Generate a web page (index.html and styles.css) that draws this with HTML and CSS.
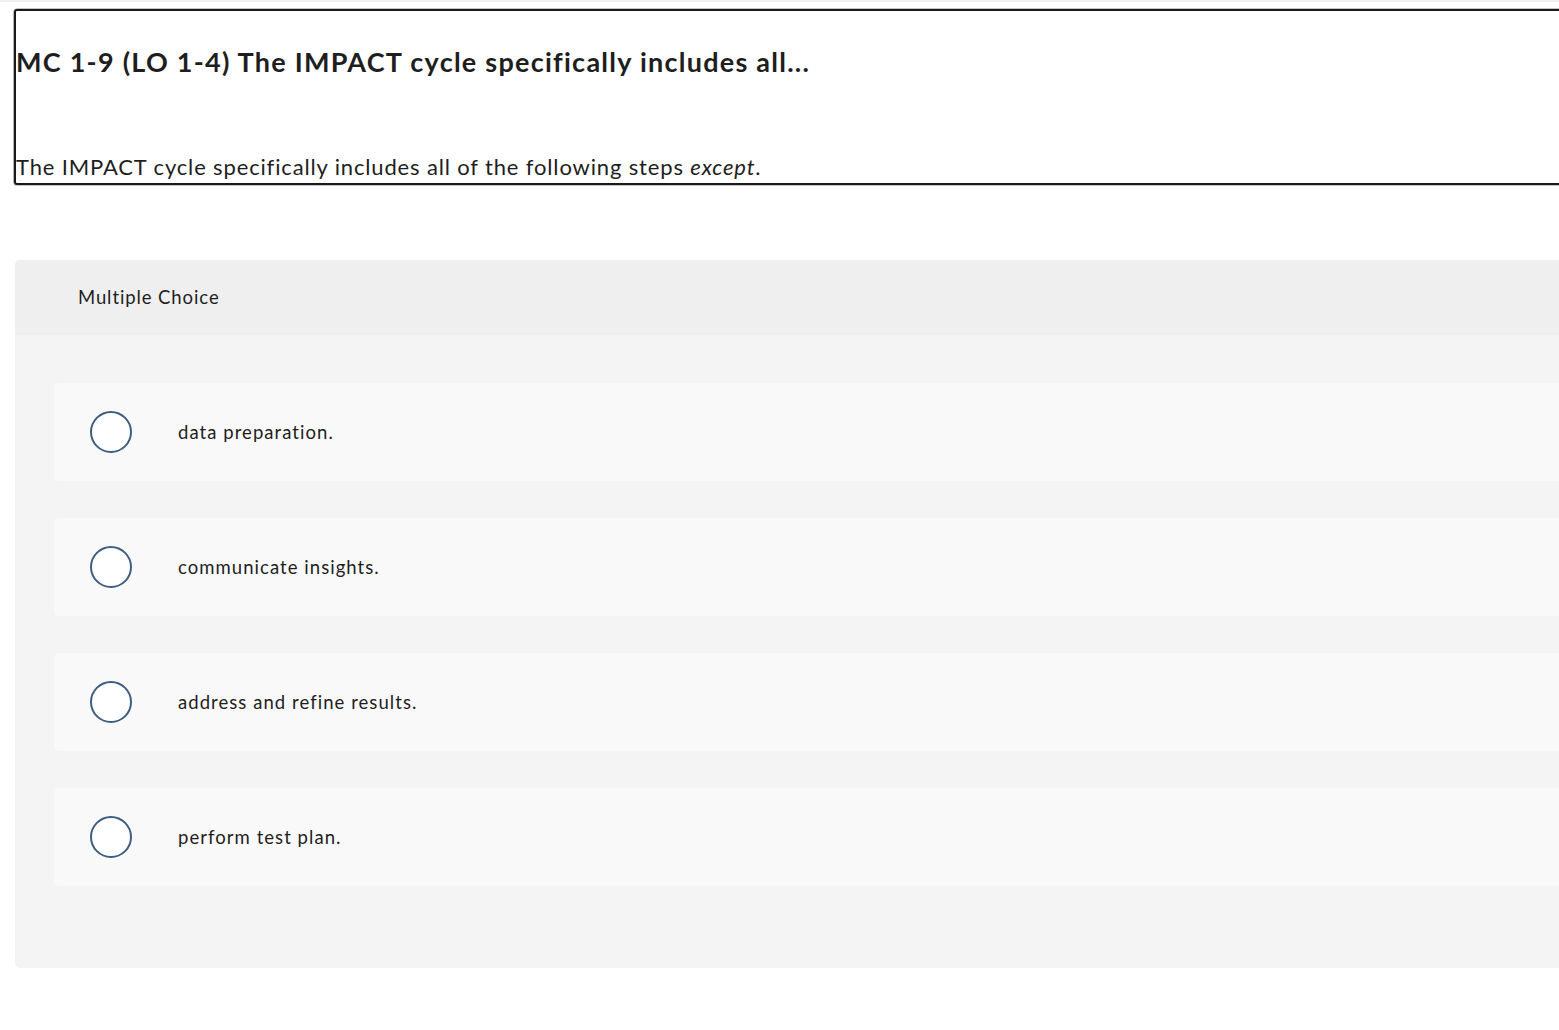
FILE: index.html
```html
<!DOCTYPE html>
<html>
<head>
<meta charset="utf-8">
<link rel="stylesheet" href="styles.css">
</head>
<body>
<div class="page">
  <div class="question">
    <h2 class="q-title">MC 1-9 (LO 1-4) The IMPACT cycle specifically includes all...</h2>
    <p class="q-text">The IMPACT cycle specifically includes all of the following steps <em>except</em>.</p>
  </div>
  <div class="panel">
    <div class="panel-head">Multiple Choice</div>
    <div class="options">
      <label class="option"><span class="radio"></span><span class="opt-text">data preparation.</span></label>
      <label class="option"><span class="radio"></span><span class="opt-text">communicate insights.</span></label>
      <label class="option"><span class="radio"></span><span class="opt-text">address and refine results.</span></label>
      <label class="option"><span class="radio"></span><span class="opt-text">perform test plan.</span></label>
    </div>
  </div>
</div>
</body>
</html>
```
FILE: styles.css
```css
html, body {
  margin: 0;
  padding: 0;
  background: #fff;
  overflow: hidden;
}
body {
  font-family: "Lato", "Noto Sans", sans-serif;
  color: #1e1e1e;
  border-top: 2px solid #efefef;
}
.page {
  padding: 7px 0 0 14px;
  width: 1600px;
}
.question {
  border: 2px solid #1a1a1a;
  box-shadow: 0 0 0 0.6px #8a8a8a;
  border-radius: 3px;
  width: 1580px;
  display: flex;
  flex-direction: column;
}
.q-title {
  margin: 0;
  padding: 35px 0 0 0;
  font-size: 27px;
  line-height: 32px;
  font-weight: 700;
  letter-spacing: 1.25px;
  color: #1e1e1e;
}
.q-text {
  margin: 76px 0 0 0;
  padding-bottom: 3px;
  font-size: 22px;
  line-height: 26px;
  letter-spacing: 0.85px;
  color: #1e1e1e;
}
.q-text em {
  font-style: italic;
}
.panel {
  margin-top: 75px;
  margin-left: 1px;
  width: 1580px;
  background: #f4f4f4;
  border-radius: 5px;
  overflow: hidden;
}
.panel-head {
  background: #efefef;
  height: 75px;
  display: flex;
  align-items: center;
  padding-left: 63px;
  padding-bottom: 1px;
  box-sizing: border-box;
  font-size: 18.5px;
  letter-spacing: 0.9px;
  color: #1e1e1e;
}
.options {
  padding: 48px 0 82px 39px;
  display: flex;
  flex-direction: column;
  gap: 37px;
}
.option {
  background: #f9f9f9;
  border-radius: 5px;
  height: 98px;
  display: flex;
  align-items: center;
  padding-left: 36px;
}
.radio {
  width: 38px;
  height: 38px;
  border: 2px solid #3d5e80;
  border-radius: 50%;
  background: #fff;
  flex: none;
}
.opt-text {
  margin-left: 46px;
  font-size: 18.5px;
  letter-spacing: 1.05px;
  color: #1e1e1e;
}
```
